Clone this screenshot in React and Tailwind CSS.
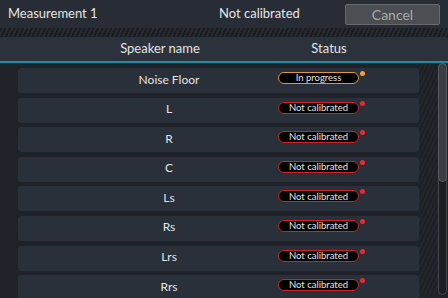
import React from 'react';

const speakers = [
  { name: 'Noise Floor', status: 'In progress', busy: true },
  { name: 'L', status: 'Not calibrated' },
  { name: 'R', status: 'Not calibrated' },
  { name: 'C', status: 'Not calibrated' },
  { name: 'Ls', status: 'Not calibrated' },
  { name: 'Rs', status: 'Not calibrated' },
  { name: 'Lrs', status: 'Not calibrated' },
  { name: 'Rrs', status: 'Not calibrated' },
];

const StatusPill = ({ label, busy }) => (
  <div className="flex items-start -mt-[5px]">
    <div
      className={
        busy
          ? 'w-[81px] h-[12px] rounded-full bg-black border-[1.5px] border-[#e8943a] flex items-center justify-center text-[9.5px] leading-none text-[#e4e4e4]'
          : 'w-[81px] h-[12px] rounded-full bg-black border-[1.5px] border-[#d0222b] flex items-center justify-center text-[9.5px] leading-none text-[#e4e4e4]'
      }
    >
      {label}
    </div>
    <span
      className={
        busy
          ? 'ml-[1px] -mt-[1px] w-[5px] h-[5px] rounded-full bg-[#f0a040]'
          : 'ml-[1px] -mt-[1px] w-[5px] h-[5px] rounded-full bg-[#e02c34]'
      }
    />
  </div>
);

const App = () => {
  return (
    <div
      className="w-[448px] h-[298px] overflow-hidden bg-[#1f2329] text-[#e4e4e4] flex flex-col"
      style={{ fontFamily: 'Lato, "Noto Sans", sans-serif' }}
    >
      {/* top bar */}
      <div className="h-[28px] shrink-0 bg-[#282d35] flex items-center">
        <div className="w-[219px] pl-2 text-[13px]">Measurement 1</div>
        <div className="text-[13px]">Not calibrated</div>
        <button className="ml-auto mr-[8px] w-[95px] h-[21px] rounded-[2px] bg-[#4b4e52] border border-[#66696d] text-[14px] text-[#a9a9a9] flex items-center justify-center">
          Cancel
        </button>
      </div>

      {/* hatched strip */}
      <div className="h-[9px] shrink-0 bg-[repeating-linear-gradient(115deg,#1a1d22_0px,#1a1d22_2px,#262a30_2px,#262a30_4px)]" />

      {/* column header */}
      <div className="h-[24px] shrink-0 bg-[#2b323b] rounded-tr-[4px] flex items-center text-[13px]">
        <div className="w-[270px] pl-[50px] text-center">Speaker name</div>
        <div className="w-[118px] text-center">Status</div>
      </div>
      <div className="h-[2px] shrink-0 bg-[#1c8ea3]" />

      {/* list */}
      <div className="flex-1 flex min-h-0">
        <div className="w-[419px] pl-[18px] pt-[5px] flex flex-col gap-[4.6px]">
          {speakers.map((s) => (
            <div
              key={s.name}
              className="h-[25px] shrink-0 rounded-[3px] bg-[#2a3039] flex items-center"
            >
              <div className="w-[260px] pl-[42px] -mt-[2px] text-center text-[12px]">{s.name}</div>
              <StatusPill label={s.status} busy={s.busy} />
            </div>
          ))}
        </div>
        <div className="flex-1 bg-[repeating-linear-gradient(115deg,#1d2126_0px,#1d2126_2px,#22262c_2px,#22262c_4px)]" />
        <div className="w-[9px] mr-[1px] mb-[3px] rounded-full bg-[#1b1e22] border border-[#44484d] flex flex-col">
          <div className="h-[119px] rounded-full bg-[#3a3e44] border border-[#56595e] -mx-px -mt-px" />
        </div>
      </div>
    </div>
  );
};

export default App;
